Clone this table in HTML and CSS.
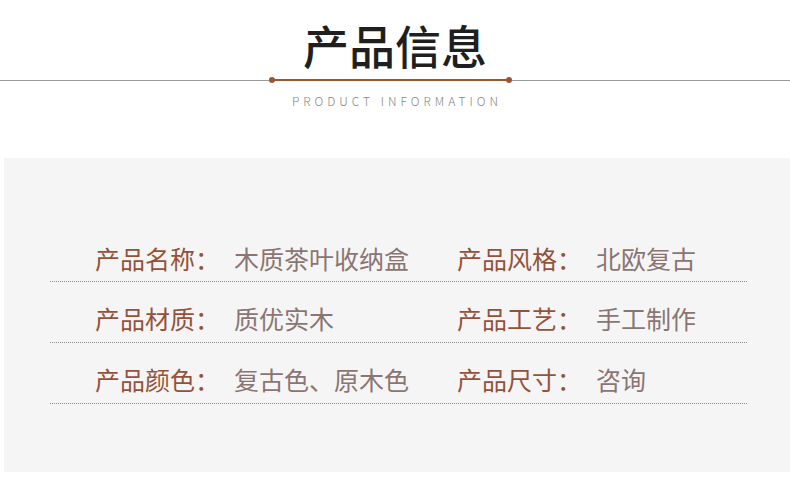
FILE: index.html
```html
<!DOCTYPE html>
<html lang="zh-CN">
<head>
    <meta charset="UTF-8">
    <meta name="viewport" content="width=device-width, initial-scale=1.0">
    <title>产品信息</title>

    <link rel="stylesheet" href="styles.css">
</head>
<body>

    <div class="head">
        <h1 class="title">产品信息</h1>
        <div class="divider">
            <span class="line-gray line-left"></span>
            <span class="line-brown"></span>
            <span class="line-gray"></span>
        </div>
        <p class="subtitle">PRODUCT INFORMATION</p>
    </div>

    <div class="panel">
        <div class="row">
            <div class="cell cell-left">
                <span class="label">产品名称：</span>
                <span class="value">木质茶叶收纳盒</span>
            </div>
            <div class="cell">
                <span class="label">产品风格：</span>
                <span class="value">北欧复古</span>
            </div>
        </div>
        <div class="row">
            <div class="cell cell-left">
                <span class="label">产品材质：</span>
                <span class="value">质优实木</span>
            </div>
            <div class="cell">
                <span class="label">产品工艺：</span>
                <span class="value">手工制作</span>
            </div>
        </div>
        <div class="row">
            <div class="cell cell-left">
                <span class="label">产品颜色：</span>
                <span class="value">复古色、原木色</span>
            </div>
            <div class="cell">
                <span class="label">产品尺寸：</span>
                <span class="value">咨询</span>
            </div>
        </div>
    </div>

</body>
</html>
```

FILE: styles.css
```css
body{
    margin: 0;
    background-color: #fff;
    font-family: "Noto Sans CJK SC", "Noto Sans", sans-serif;
}

.head{
    height: 158px;
    text-align: center;
}

.title{
    margin: 0;
    padding-top: 21px;
    font-size: 46px;
    line-height: 46px;
    font-weight: 500;
    color: #1f1f1f;
}

.divider{
    display: flex;
    align-items: center;
    margin-top: 11px;
    height: 4px;
}

.line-gray{
    flex: 1;
    height: 1px;
    background-color: #9a9a9a;
}

.line-left{
    flex: 0 0 272px;
}

.line-brown{
    position: relative;
    width: 237px;
    height: 2px;
    background-color: #9b5535;
}

.line-brown::before,
.line-brown::after{
    content: "";
    position: absolute;
    top: -2px;
    width: 6px;
    height: 6px;
    border-radius: 50%;
    background-color: #9b5535;
}

.line-brown::before{
    left: -3px;
}

.line-brown::after{
    right: -3px;
}

.subtitle{
    margin: 12px 0 0 0;
    font-size: 12px;
    line-height: 14px;
    font-weight: 300;
    letter-spacing: 4px;
    text-indent: 4px;
    color: #858585;
}

.panel{
    margin-left: 4px;
    height: 314px;
    box-sizing: border-box;
    padding: 64px 0 0 46px;
    background-color: #f5f5f5;
}

.row{
    display: flex;
    width: 697px;
    height: 60px;
    box-sizing: border-box;
    padding-top: 20px;
    border-bottom: 1px dotted #8d8d8d;
}

.row + .row{
    height: 61px;
    padding-top: 20px;
}

.cell{
    display: flex;
    align-items: center;
    height: 32px;
}

.cell-left{
    width: 407px;
    padding-left: 45px;
    box-sizing: border-box;
}

.label{
    width: 139px;
    flex-shrink: 0;
    font-size: 25px;
    color: #93533a;
}

.value{
    font-size: 25px;
    color: #8a7572;
    white-space: nowrap;
}
```
